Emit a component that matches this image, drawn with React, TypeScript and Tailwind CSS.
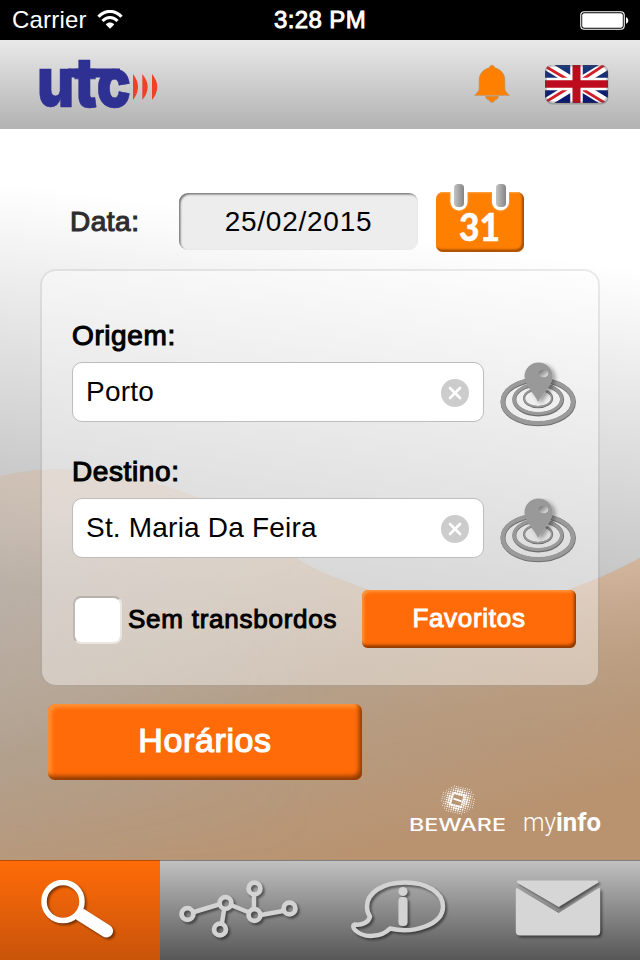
import type { ReactNode } from 'react';

const SANS = "font-['Liberation_Sans',Arial,sans-serif]";

function StatusBar() {
  return (
    <div className="flex h-10 items-center bg-black px-3 text-white">
      <div className="flex w-[239px] items-center gap-[10px]">
        <span className="text-[24px] leading-[42px] tracking-[0.2px]">Carrier</span>
        <svg width="26" height="20" viewBox="0 0 26 20" fill="none" stroke="#fff">
          <path d="M1.5 6.8C8-.4 18-.4 24.5 6.8" strokeWidth="3.2" />
          <path d="M5.5 11C10 6.2 16 6.2 20.5 11" strokeWidth="3" />
          <path d="M13 18.8L8.8 14.4C11 12 15 12 17.2 14.4Z" fill="#fff" stroke="none" />
        </svg>
      </div>
      <span className="w-[138px] text-center text-[24px] leading-[42px] tracking-[0.4px] whitespace-nowrap [-webkit-text-stroke:0.9px_#fff]">
        3:28 PM
      </span>
      <svg className="ml-auto -mr-px" width="49" height="19" viewBox="0 0 49 19">
        <rect x=".75" y=".75" width="43.5" height="17.5" rx="3.5" fill="none" stroke="#fff" strokeWidth="1.1" />
        <rect x="2.2" y="2.2" width="40.6" height="14.6" rx="2" fill="#fff" />
        <path d="M46 6.2c3 .8 3 5.8 0 6.6z" fill="#fff" />
      </svg>
    </div>
  );
}

function UtcLogo() {
  return (
    <svg className="-ml-[3px] overflow-visible" width="125" height="89" viewBox="-3 0 125 89">
      <text
        x="-1"
        y="66.5"
        textLength="94"
        lengthAdjust="spacingAndGlyphs"
        className="font-['Inter',sans-serif] text-[69px] font-black"
        fill="#2e3192"
        stroke="#2e3192"
        strokeWidth=".6"
      >
        utc
      </text>
      {/* bar that ties the three letters together */}
      <rect x="30" y="28.5" width="52" height="9" fill="#2e3192" />
      <g fill="#f04124">
        <path d="M95 34Q105 47 95 60Z" />
        <path d="M104.3 34Q115 47 104.3 60Z" />
        <path d="M114 34Q124.5 47 114 60Z" />
      </g>
    </svg>
  );
}

function BellIcon() {
  return (
    <svg width="36" height="40" viewBox="0 0 36 40" fill="#ff8000" stroke="#b98f62" strokeWidth=".7">
      <path d="M18 1.2c1.2 0 2.2 1 2.8 2.6C27 5.5 30.8 10 30.8 16v8.5c0 2.5 1.7 4.2 4.6 6.8H.6C3.5 28.7 5.2 27 5.2 24.5V16C5.2 10 9 5.5 15.2 3.8 15.8 2.2 16.8 1.2 18 1.2z" />
      <path d="M11.5 32.3h13c-.3 2-1.8 3.4-3.6 3.7-.6 1.4-1.6 2.3-2.9 2.3s-2.3-.9-2.9-2.3c-1.8-.3-3.3-1.7-3.6-3.7z" />
    </svg>
  );
}

function FlagIcon() {
  return (
    <svg width="66" height="42" viewBox="0 0 66 42">
      <defs>
        <clipPath id="flag">
          <rect x="1" y="1" width="63" height="38" rx="7" />
        </clipPath>
        <linearGradient id="flagBlue" x1="0" y1="0" x2="0" y2="1">
          <stop offset="0" stopColor="#1c3a7c" />
          <stop offset="1" stopColor="#06146e" />
        </linearGradient>
      </defs>
      <rect x="1.5" y="2.5" width="63" height="38" rx="7" fill="#777" opacity=".5" />
      <g clipPath="url(#flag)">
        <rect x="1" y="1" width="63" height="38" fill="url(#flagBlue)" />
        <path d="M0 0L65 40M65 0L0 40" stroke="#fff" strokeWidth="9" />
        <path d="M0 1.5L26 17M38 25L65 41.5M65-2L39 15M26 23L0 39" stroke="#d0202c" strokeWidth="2.8" />
        <path d="M32.5 0v40M0 20h65" stroke="#fff" strokeWidth="12.5" />
        <path d="M32.5 0v40" stroke="#be0b1e" strokeWidth="8" />
        <path d="M0 20h65" stroke="#be0b1e" strokeWidth="7.5" />
        <rect x="1.5" y="1.5" width="62" height="37" rx="7" fill="none" stroke="#444" strokeOpacity=".3" strokeWidth="2.5" />
      </g>
    </svg>
  );
}

function CalendarIcon() {
  return (
    <svg width="90" height="70" viewBox="0 0 90 70">
      <defs>
        <linearGradient id="ring" x1="0" x2="1">
          <stop offset="0" stopColor="#c4c4c4" />
          <stop offset="1" stopColor="#858585" />
        </linearGradient>
        <filter id="soft" x="-10%" y="-10%" width="120%" height="120%">
          <feGaussianBlur stdDeviation="1" />
        </filter>
        <clipPath id="calendar">
          <rect x="1" y="8" width="88" height="60" rx="7" />
        </clipPath>
      </defs>
      <g clipPath="url(#calendar)">
        <rect x="1" y="8" width="88" height="60" fill="#ff8000" />
        <rect x="-2" y="5" width="90.5" height="62" rx="8" fill="none" stroke="#8a3d00" strokeWidth="2.5" filter="url(#soft)" />
        <path d="M1 13.5q1-5 6-5h80" fill="none" stroke="#ff9c3c" strokeWidth="1.5" />
      </g>
      <path d="M15.5 9v9a8.5 8.5 0 0 0 17 0V9zM57 9v9a8.5 8.5 0 0 0 17 0V9z" fill="#ffb066" filter="url(#soft)" />
      <path d="M15.5 7v11a8.5 8.5 0 0 0 17 0V7zM57 7v11a8.5 8.5 0 0 0 17 0V7z" fill="#fff" />
      <rect x="19" width="10" height="23" rx="4" fill="url(#ring)" />
      <rect x="61" width="10" height="23" rx="4" fill="url(#ring)" />
      <text
        x="24"
        y="57"
        textLength="41"
        lengthAdjust="spacingAndGlyphs"
        className="font-['Lato',sans-serif] text-[37px] font-black"
        fill="#fff"
        stroke="#fff"
        strokeWidth=".4"
      >
        31
      </text>
    </svg>
  );
}

function LocateIcon() {
  return (
    <svg className="shrink-0" width="80" height="68" viewBox="0 1 80 68">
      <defs>
        <filter id="pinShadow" x="-30%" y="-30%" width="180%" height="160%">
          <feDropShadow dx="3" dy="2" stdDeviation="2" floodOpacity=".35" />
        </filter>
        <linearGradient id="pinHole" x1="0" y1="0" x2="1" y2="1">
          <stop offset=".2" stopColor="#808080" />
          <stop offset="1" stopColor="#f4f4f4" />
        </linearGradient>
      </defs>
      <g fill="none">
        <g stroke="#707070">
          <ellipse cx="40.2" cy="41" rx="35.2" ry="21.8" strokeWidth="5" />
          <ellipse cx="40.2" cy="38.6" rx="23.9" ry="14.8" strokeWidth="4" />
          <ellipse cx="40.1" cy="37.3" rx="14" ry="8.9" strokeWidth="2.2" />
        </g>
        <g stroke="#9a9a9a">
          <ellipse cx="39.9" cy="40.4" rx="35.2" ry="21.7" strokeWidth="4.2" />
          <ellipse cx="39.9" cy="38" rx="23.8" ry="14.5" strokeWidth="3.2" />
          <ellipse cx="39.9" cy="37" rx="13.8" ry="8.7" strokeWidth="1.5" />
        </g>
      </g>
      <path
        d="M40 41C37.5 33.5 26.5 25 26.5 15.5a14 14 0 0 1 28 0C54.5 25 43.5 33.5 40 41z"
        fill="#999"
        filter="url(#pinShadow)"
      />
      <ellipse cx="45.5" cy="12.5" rx="4.8" ry="3.8" fill="url(#pinHole)" />
    </svg>
  );
}

function ClearIcon() {
  return (
    <svg className="relative top-px" width="28" height="28" viewBox="0 0 28 28">
      <circle cx="14" cy="14" r="14" fill="#ccc" />
      <path d="M9 9l10 10M19 9L9 19" stroke="#fff" strokeWidth="2.6" strokeLinecap="round" />
    </svg>
  );
}

function StopField({ label, value }: { label: string; value: string }) {
  return (
    <div>
      <div className="h-[44px] text-[28px] leading-[36px] tracking-[0.6px] [-webkit-text-stroke:1.1px_#000]">{label}</div>
      <div className="flex">
        <div className="flex h-[60px] w-[412px] items-center justify-between rounded-[10px] border border-[#bdbdbd] bg-white pr-[14px] pl-[13px] text-[28px]">
          <span className="tracking-[0.2px]">{value}</span>
          <ClearIcon />
        </div>
        <div className="ml-[14px] h-[60px]">
          <LocateIcon />
        </div>
      </div>
    </div>
  );
}

// Halftone globe above the company name
function Halftone() {
  const dots: ReactNode[] = [];
  for (let row = -7; row <= 7; row++) {
    for (let col = -8; col <= 8; col++) {
      const x = col * 2.2 + row * -0.5;
      const y = row * 2.1 + col * 0.5;
      const d = Math.hypot(x / 17, y / 15);
      const inB = Math.abs(col) <= 2 && Math.abs(row) <= 2;
      if (d > 1 || inB) continue;
      dots.push(<circle key={`${row}:${col}`} cx={48 + x} cy={15 + y} r={d > 0.8 ? 0.5 : d > 0.6 ? 0.8 : 1.05} />);
    }
  }
  return <g fill="#fff">{dots}</g>;
}

function BewareLogo() {
  return (
    <svg width="97" height="50" viewBox="0 0 97 50">
      <Halftone />
      <g fill="none" stroke="#fff" strokeWidth="1.8">
        <path d="M43.5 8l11 3-3.5 11-11-3z" strokeDasharray="2 .4" />
        <path d="M43.5 13.7l8 2.6" />
      </g>
      <text
        x="-1"
        y="46"
        textLength="97"
        lengthAdjust="spacingAndGlyphs"
        className="font-['Inter',sans-serif] text-[17px] font-medium"
        fill="#fff"
      >
        BEWARE
      </text>
    </svg>
  );
}

function MyInfoLogo() {
  return (
    <svg width="80" height="36" viewBox="0 0 80 36" fill="#fff" className="font-['Roboto',sans-serif] text-[25px]">
      <text x="0" y="26" textLength="33" lengthAdjust="spacingAndGlyphs" className="font-light">
        my
      </text>
      <text x="33" y="26" textLength="45" lengthAdjust="spacingAndGlyphs" className="font-bold">
        info
      </text>
    </svg>
  );
}

const HILL = 'M0 476Q90 455 197 497C245 517 285 555 320 571Q460 632 570 589Q610 575 640 558V860H0Z';

function Backdrop() {
  return (
    <svg className="absolute inset-0" width="640" height="731" viewBox="0 129 640 731">
      <defs>
        <linearGradient id="sky" gradientUnits="userSpaceOnUse" x1="290" y1="220" x2="240" y2="580">
          <stop offset="0" stopColor="#fff" />
          <stop offset="1" stopColor="#bcbcbd" />
        </linearGradient>
        <linearGradient id="dune" gradientUnits="userSpaceOnUse" x1="240" y1="470" x2="340" y2="860">
          <stop offset="0" stopColor="#d3c4b7" />
          <stop offset=".55" stopColor="#b5a08a" />
          <stop offset="1" stopColor="#b99370" />
        </linearGradient>
        <linearGradient id="duneLeft" x1="0" x2="1">
          <stop offset="0" stopColor="#a0a0a0" stopOpacity=".4" />
          <stop offset=".5" stopColor="#a0a0a0" stopOpacity="0" />
        </linearGradient>
        <linearGradient id="duneFade" x1="0" y1="0" x2="0" y2="1">
          <stop offset="0" stopColor="#fff" stopOpacity="0" />
          <stop offset=".35" stopColor="#fff" />
          <stop offset="1" stopColor="#fff" stopOpacity="0" />
        </linearGradient>
        <mask id="duneMask">
          <rect y="440" width="640" height="420" fill="url(#duneFade)" />
        </mask>
        <linearGradient id="duneRight" gradientUnits="userSpaceOnUse" x1="590" y1="560" x2="610" y2="740">
          <stop offset="0" stopColor="#d6b8a0" stopOpacity=".9" />
          <stop offset="1" stopColor="#b9946f" stopOpacity="0" />
        </linearGradient>
        <linearGradient id="shade" x1="0" x2="1">
          <stop offset=".5" stopColor="#fff" stopOpacity="0" />
          <stop offset=".95" stopColor="#fff" />
        </linearGradient>
        <mask id="rightMask">
          <rect y="470" width="640" height="390" fill="url(#shade)" />
        </mask>
      </defs>
      <rect y="129" width="640" height="731" fill="url(#sky)" />
      <path d={HILL} fill="url(#dune)" />
      <g mask="url(#duneMask)">
        <path d={HILL} fill="url(#duneLeft)" />
      </g>
      <g mask="url(#rightMask)">
        <path d={HILL} fill="url(#duneRight)" />
      </g>
    </svg>
  );
}

function SearchIcon() {
  return (
    <svg width="76" height="62" viewBox="0 0 76 62" fill="none" stroke="#fff">
      <circle cx="22" cy="21.5" r="19" strokeWidth="5.5" />
      <path d="M36 33L43 29 69 45.5A6.5 6.5 0 0 1 62 56.5L35 39.5Z" fill="#fff" stroke="none" />
    </svg>
  );
}

function NetworkIcon() {
  return (
    <svg width="120" height="60" viewBox="0 0 120 60" fill="none" stroke="#d3d3d3">
      <path d="M15 32L40 24.5M53 25.5L69 32M45 30L43 43M75 16V28M82 35L104 31" strokeWidth="4.5" />
      <g strokeWidth="4.8">
        <circle cx="8.5" cy="34" r="5.9" />
        <circle cx="46.5" cy="23" r="5.9" />
        <circle cx="41" cy="49.5" r="5.9" />
        <circle cx="75.5" cy="8.5" r="5.9" />
        <circle cx="75.5" cy="35" r="5.9" />
        <circle cx="110.5" cy="28.5" r="5.9" />
      </g>
    </svg>
  );
}

function InfoIcon() {
  return (
    <svg width="96" height="60" viewBox="0 0 96 60" fill="none" stroke="#d3d3d3">
      <path
        d="M39 48.5C62 54 92 45 92 26.5C92 12.5 76 2.5 54 2.5S16 12.5 16 26.5C16 31 17 34 19 36.5C18 42 11 45.5 4 44.5C1.5 45 2 48 4 50C13 59 31 57 39 48.5Z"
        strokeWidth="4.5"
        strokeLinejoin="round"
      />
      <circle cx="52" cy="11.5" r="4.6" fill="#d3d3d3" stroke="none" />
      <rect x="47.4" y="17" width="9.2" height="29" rx="4" fill="#d3d3d3" stroke="none" />
    </svg>
  );
}

function MailIcon() {
  return (
    <svg width="88" height="58" viewBox="0 0 88 58" fill="#d6d6d6">
      <path d="M3 .5H82Q84.5 1 82.5 3L43.7 27 2.5 3Q1 1 3 .5z" />
      <path d="M.8 10Q.8 7 3 8.5L43.7 33 83 8.5Q85.2 7 85.2 10V51Q85.2 55.5 80.7 55.5H5.3Q.8 55.5 .8 51z" />
    </svg>
  );
}

interface TabProps {
  active?: boolean;
  label: string;
  children: ReactNode;
}

function Tab({ active, label, children }: TabProps) {
  return (
    <button
      aria-label={label}
      className={
        active
          ? 'flex h-full items-start justify-center border-t border-[#b84d0a] bg-linear-to-b from-[#ff6b08] to-[#c9540a] pt-[19px] pr-[3px]'
          : 'flex h-full items-start justify-center border-t border-[#7e7e7c] bg-linear-to-b from-[#c1c1c1] to-[#575757] pt-[19px] pr-[3px]'
      }
    >
      <span className="drop-shadow-[2px_2px_1px_rgba(0,0,0,0.45)]">{children}</span>
    </button>
  );
}

export default function App() {
  return (
    <div className={`flex h-[960px] w-[640px] flex-col overflow-hidden text-black ${SANS}`}>
      <StatusBar />
      <header className="flex h-[89px] items-start bg-linear-to-b from-[#e9e9e9] to-[#b2b2b2] pl-[38px]">
        <UtcLogo />
        <div className="ml-[314px] pt-6">
          <BellIcon />
        </div>
        <div className="ml-[34px] pt-6">
          <FlagIcon />
        </div>
      </header>

      <main className="relative h-[731px]">
        <Backdrop />
        <div className="relative flex h-full flex-col">
          <div className="flex h-[140px] items-start pt-[54px] pl-[70px]">
            <span className="mt-[10px] w-[109px] pt-[9px] text-[28px] leading-[40px] tracking-[0.5px] text-[#2d2d2d] [-webkit-text-stroke:1.1px_#2d2d2d]">
              Data:
            </span>
            <div className="mt-[10px] h-[57px] w-[239px] rounded-[9px] bg-[#ededed] text-center text-[28px] leading-[58px] tracking-[0.75px] shadow-[inset_1.5px_1.5px_2px_#777]">
              25/02/2015
            </div>
            <div className="mt-px ml-[17px]">
              <CalendarIcon />
            </div>
          </div>

          <section className="ml-10 flex h-[418px] w-[560px] flex-col rounded-[16px] border-2 border-[#a0a0a0]/20 bg-white/40 bg-clip-padding pt-[47px] pl-[30px]">
            <div className="h-[136px]">
              <StopField label="Origem:" value="Porto" />
            </div>
            <div className="h-[136px]">
              <StopField label="Destino:" value="St. Maria Da Feira" />
            </div>
            <div className="flex items-start">
              <div className="mt-[6px] ml-px h-[48px] w-[49px] rounded-[8px] border-2 border-white/50 border-t-[#aaa4a0]/70 border-l-[#b5b0ac]/70 bg-white bg-clip-padding" />
              <span className="ml-[6px] w-[234px] text-[26px] leading-[58px] tracking-[0.75px] whitespace-nowrap [-webkit-text-stroke:1px_#000]">
                Sem transbordos
              </span>
              <button className="h-[58px] w-[214px] rounded-[6px] bg-[#ff6b08] pb-[2px] text-[26px] tracking-[0.7px] text-white shadow-[inset_-2px_-3px_3px_#913c00,inset_2px_2px_3px_#ff963c] [-webkit-text-stroke:1px_#fff]">
                Favoritos
              </button>
            </div>
          </section>

          <button className="mt-[17px] ml-12 h-[76px] w-[314px] rounded-[7px] bg-[#ff6b08] pb-[3px] text-[34px] tracking-[0.6px] text-white shadow-[inset_-3px_-4px_4px_#913c00,inset_3px_3px_4px_#ff963c] [-webkit-text-stroke:1.2px_#fff]">
            Horários
          </button>

          <div className="mt-[5px] flex pl-[410px]">
            <BewareLogo />
            <div className="ml-[16px] pt-5">
              <MyInfoLogo />
            </div>
          </div>
        </div>
      </main>

      <nav className="grid h-[100px] grid-cols-4">
        <Tab active label="Pesquisar">
          <SearchIcon />
        </Tab>
        <Tab label="Rede">
          <NetworkIcon />
        </Tab>
        <Tab label="Informações">
          <InfoIcon />
        </Tab>
        <Tab label="Contacto">
          <MailIcon />
        </Tab>
      </nav>
    </div>
  );
}
